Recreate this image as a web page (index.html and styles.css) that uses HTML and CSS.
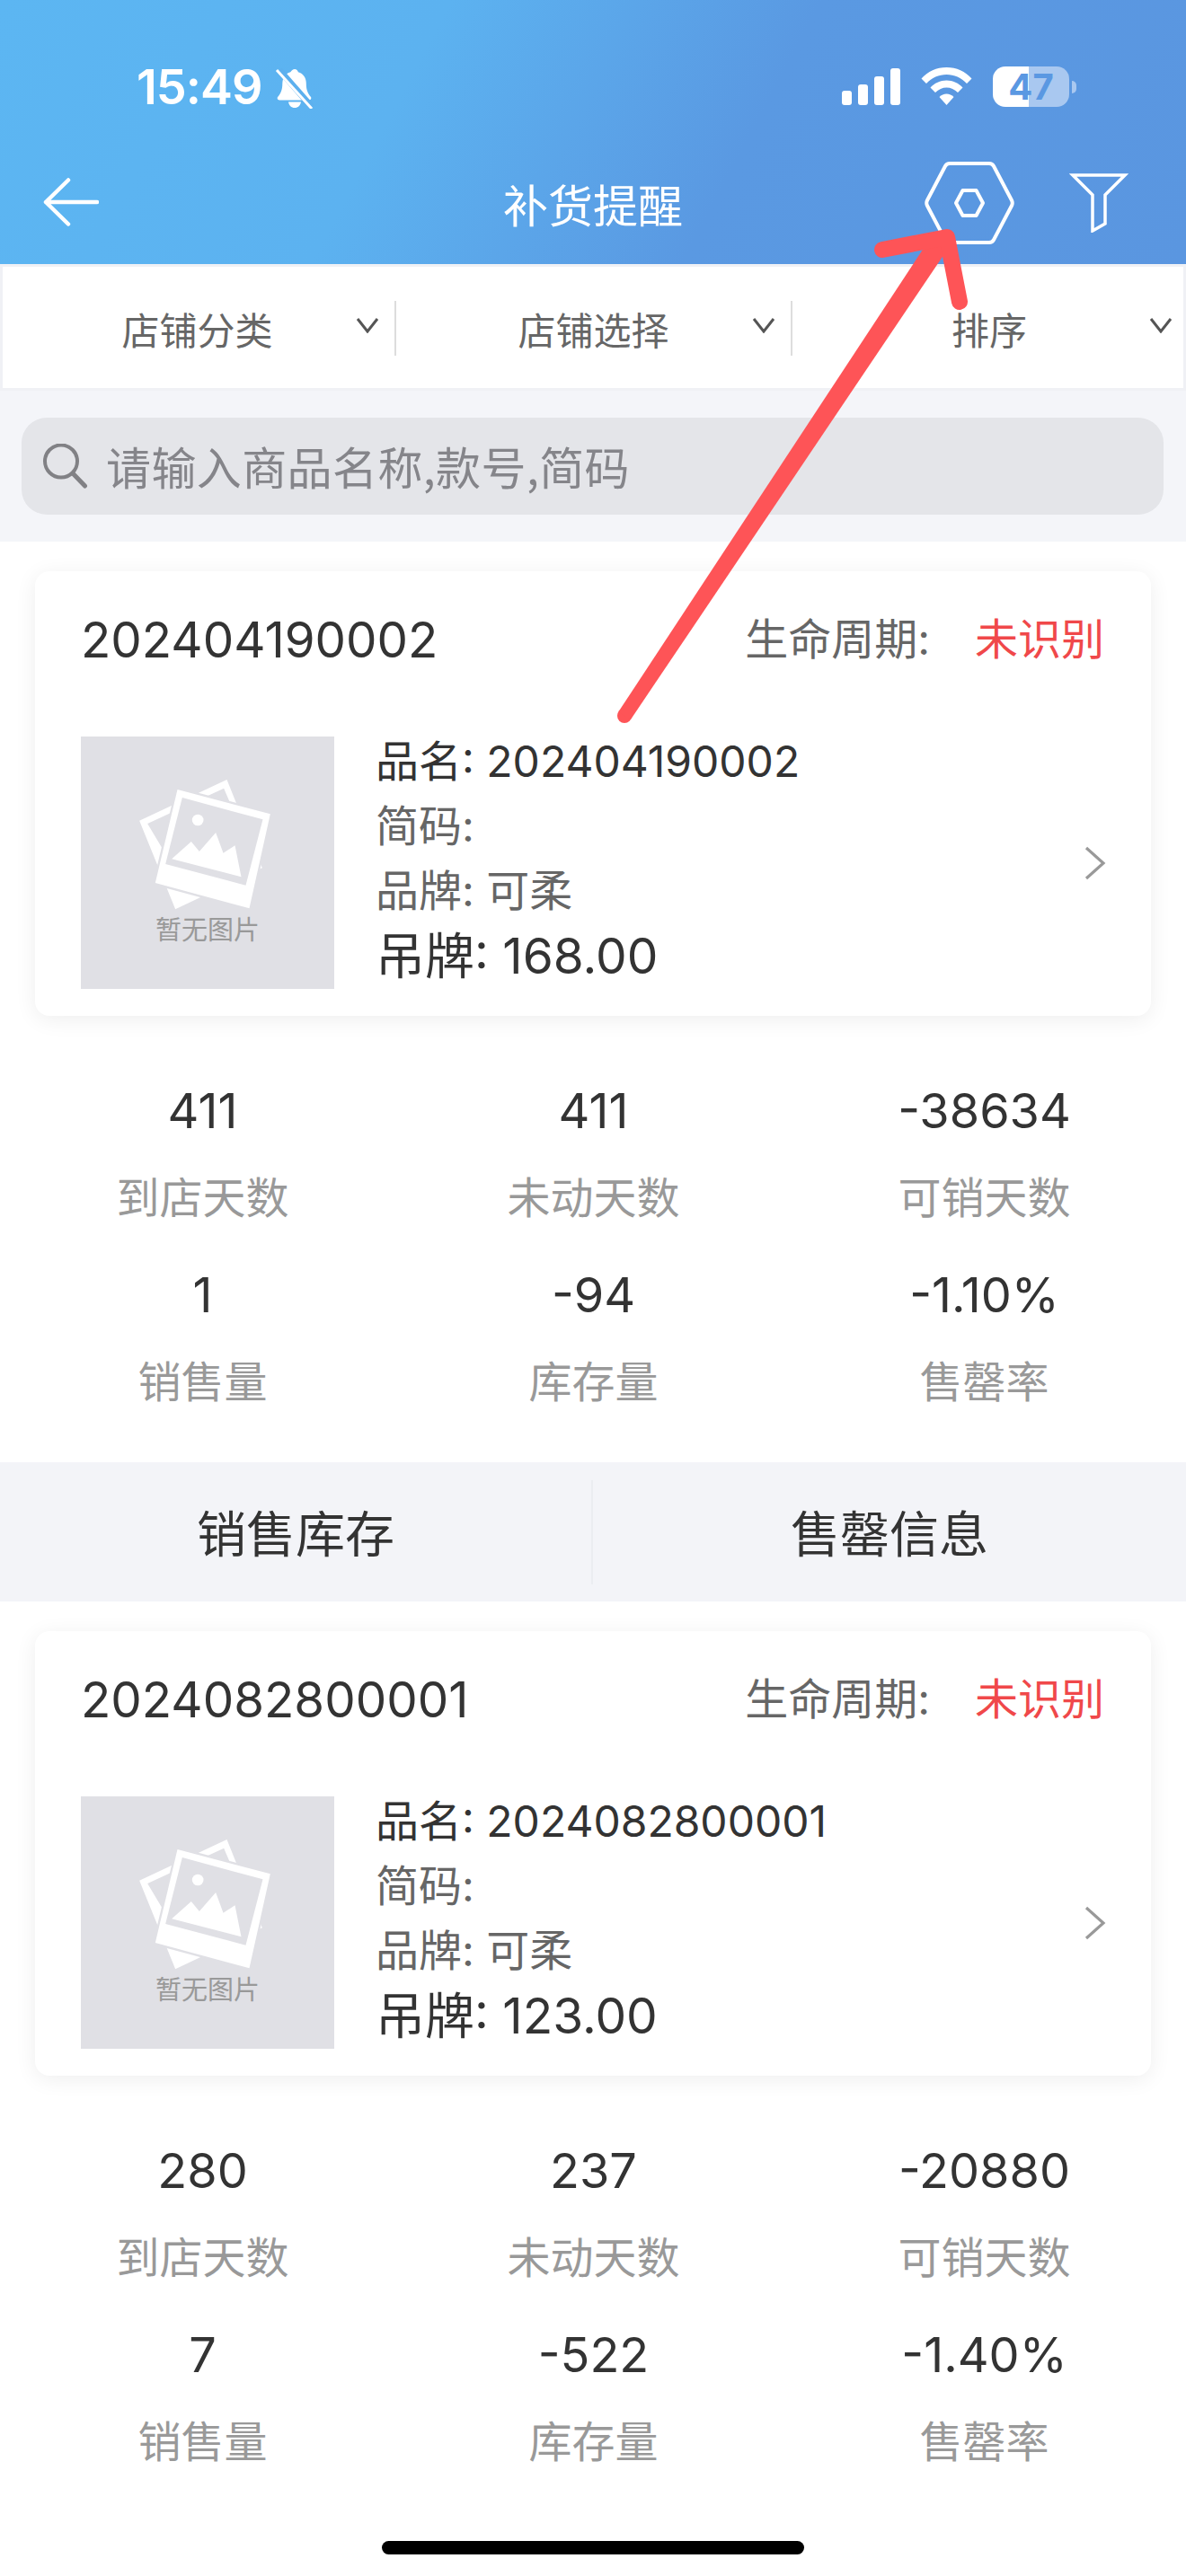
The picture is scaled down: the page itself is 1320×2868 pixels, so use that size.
FILE: index.html
```html
<!DOCTYPE html>
<html lang="zh">
<head>
<meta charset="utf-8">
<title>补货提醒</title>
<link rel="stylesheet" href="styles.css">
</head>
<body>
<div class="page">
  <header class="top">
    <div class="status">
      <div class="status-left">
        <span class="time">15:49</span>
        <svg class="bell" viewBox="0 0 44 46"><path d="M22 2c2 0 3.500 1.500 3.800 3.300 6 1.700 9 6.700 9 13 0 7 2 11 5 14.500 1.200 1.500.2 3.700-1.700 3.700H5c-2 0-3-2.200-1.700-3.700 3-3.500 5-7.500 5-14.500 0-6.300 3-11.300 9-13C18.500 3.500 20 2 22 2zM15 38.500h14c-.5 3.800-3.300 6.500-7 6.500s-6.500-2.700-7-6.500z" fill="#fff"/><path d="M5 3l36 41" stroke="#5cb0ee" stroke-width="7"/><path d="M2 3l39 43" stroke="#fff" stroke-width="3"/></svg>
      </div>
      <div class="status-right">
        <div class="signal"><i class="b1"></i><i class="b2"></i><i class="b3"></i><i class="b4"></i></div>
        <svg class="wifi" viewBox="0 0 57 42"><path d="M0.500 12.500C7.500 4.500 17.500 0 28.500 0S49.500 4.500 56.500 12.500L51 18C45 11.500 37 8 28.500 8S12 11.500 6 18z" fill="#fff"/><path d="M10.500 22.500C15 17.500 21.500 14.500 28.500 14.500S42 17.500 46.500 22.500L41 28C37.500 24.500 33 22.500 28.500 22.500S19.500 24.500 16 28z" fill="#fff"/><path d="M20.500 33C22.500 31 25.500 29.500 28.500 29.500S34.500 31 36.500 33L28.500 42z" fill="#fff"/></svg>
        <div class="battery"><div class="cell"><span class="pct">47</span></div><i class="nub"></i></div>
      </div>
    </div>
    <div class="nav">
      <svg class="back" viewBox="0 0 62 54"><path d="M60 27H3M28 2.500L3 27l25 24.500" fill="none" stroke="#fff" stroke-width="4.500" stroke-linecap="round" stroke-linejoin="round"/></svg>
      <h1 class="title">补货提醒</h1>
      <svg class="hex" viewBox="0 0 100 92"><path d="M28 2h44c2.200 0 4 1.100 5 3l20 38c1 2 1 4 0 6L77 87c-1 1.900-2.800 3-5 3H28c-2.200 0-4-1.100-5-3L3 49c-1-2-1-4 0-6L23 5c1-1.900 2.800-3 5-3z" fill="none" stroke="#fff" stroke-width="4"/><path d="M42.500 32h15l7.500 14-7.500 14h-15L35 46z" fill="none" stroke="#fff" stroke-width="4" stroke-linejoin="round"/></svg>
      <svg class="funnel" viewBox="0 0 66 66"><path d="M4 2h58L40 24v32l-14 8V24z" fill="none" stroke="#fff" stroke-width="3.500"/></svg>
    </div>
  </header>

  <div class="filters">
    <div class="filter"><span class="filter-text">店铺分类</span><svg class="chev" viewBox="0 0 26 18"><path d="M2 2l11 14L24 2" fill="none" stroke="#555" stroke-width="3"/></svg></div>
    <div class="filter"><span class="filter-text">店铺选择</span><svg class="chev" viewBox="0 0 26 18"><path d="M2 2l11 14L24 2" fill="none" stroke="#555" stroke-width="3"/></svg></div>
    <div class="filter last"><span class="filter-text">排序</span><svg class="chev" viewBox="0 0 26 18"><path d="M2 2l11 14L24 2" fill="none" stroke="#555" stroke-width="3"/></svg></div>
  </div>

  <div class="search-wrap">
    <div class="search">
      <svg class="search-icon" viewBox="0 0 50 50"><circle cx="20" cy="19.500" r="18" fill="none" stroke="#818185" stroke-width="4"/><path d="M33 33L46.500 47" stroke="#818185" stroke-width="5" stroke-linecap="round"/></svg>
      <span class="search-text">请输入商品名称,款号,简码</span>
    </div>
  </div>

  <section class="item">
    <div class="card">
      <div class="card-head">
        <span class="code">202404190002</span>
        <span class="life"><span class="life-label">生命周期:</span><span class="life-value">未识别</span></span>
      </div>
      <div class="card-body">
        <div class="thumb">
          <svg class="photo" viewBox="285 205 440 435"><path fill-rule="evenodd" d="M285 342L577 205 695 500 405 638zM312 352L400 500 680 500 567 234z" fill="#fff"/><path d="M412 238L722 320 652 635 338 550z" fill="#e0e0e5" stroke="#e0e0e5" stroke-width="14"/><path fill-rule="evenodd" d="M412 238L722 320 652 635 338 550zM428 265L697 338 640 558 372 487z" fill="#fff"/><path d="M393 470L458 412 485 445 540 382 565 450 604 425 625 530z" fill="#fff"/><circle cx="480" cy="340" r="19" fill="#fff"/></svg>
          <span class="thumb-text">暂无图片</span>
        </div>
        <div class="info">
          <div class="row dark">品名: 202404190002</div>
          <div class="row">简码:</div>
          <div class="row">品牌: 可柔</div>
          <div class="row tag">吊牌: 168.00</div>
        </div>
        <svg class="more" viewBox="0 0 24 38"><path d="M2 2l19 17L2 36" fill="none" stroke="#999" stroke-width="3.200"/></svg>
      </div>
    </div>
    <div class="stats">
      <div class="stat"><b>411</b><span>到店天数</span></div>
      <div class="stat"><b>411</b><span>未动天数</span></div>
      <div class="stat"><b>-38634</b><span>可销天数</span></div>
      <div class="stat"><b>1</b><span>销售量</span></div>
      <div class="stat"><b>-94</b><span>库存量</span></div>
      <div class="stat"><b>-1.10%</b><span>售罄率</span></div>
    </div>
    <div class="tabs">
      <div class="tab">销售库存</div>
      <div class="tab">售罄信息</div>
    </div>
  </section>

  <section class="item">
    <div class="card">
      <div class="card-head">
        <span class="code">2024082800001</span>
        <span class="life"><span class="life-label">生命周期:</span><span class="life-value">未识别</span></span>
      </div>
      <div class="card-body">
        <div class="thumb">
          <svg class="photo" viewBox="285 205 440 435"><path fill-rule="evenodd" d="M285 342L577 205 695 500 405 638zM312 352L400 500 680 500 567 234z" fill="#fff"/><path d="M412 238L722 320 652 635 338 550z" fill="#e0e0e5" stroke="#e0e0e5" stroke-width="14"/><path fill-rule="evenodd" d="M412 238L722 320 652 635 338 550zM428 265L697 338 640 558 372 487z" fill="#fff"/><path d="M393 470L458 412 485 445 540 382 565 450 604 425 625 530z" fill="#fff"/><circle cx="480" cy="340" r="19" fill="#fff"/></svg>
          <span class="thumb-text">暂无图片</span>
        </div>
        <div class="info">
          <div class="row dark">品名: 2024082800001</div>
          <div class="row">简码:</div>
          <div class="row">品牌: 可柔</div>
          <div class="row tag">吊牌: 123.00</div>
        </div>
        <svg class="more" viewBox="0 0 24 38"><path d="M2 2l19 17L2 36" fill="none" stroke="#999" stroke-width="3.200"/></svg>
      </div>
    </div>
    <div class="stats">
      <div class="stat"><b>280</b><span>到店天数</span></div>
      <div class="stat"><b>237</b><span>未动天数</span></div>
      <div class="stat"><b>-20880</b><span>可销天数</span></div>
      <div class="stat"><b>7</b><span>销售量</span></div>
      <div class="stat"><b>-522</b><span>库存量</span></div>
      <div class="stat"><b>-1.40%</b><span>售罄率</span></div>
    </div>
  </section>

  <div class="home-bar"></div>

  <svg class="annotation" viewBox="0 0 1320 2868"><circle cx="695" cy="797" r="8" fill="#fe5457"/><path d="M688.300 792.600L1040 258 1059 271 701.700 801.400z" fill="#fe5457"/><path d="M982 278L1054 264 1068 336" fill="none" stroke="#fe5457" stroke-width="18" stroke-linecap="round" stroke-linejoin="round"/></svg>
</div>
</body>
</html>
```
FILE: styles.css
```css
* { box-sizing: border-box; }
html, body { margin: 0; padding: 0; background: #fff; }
body { font-family: "Inter", "Noto Sans CJK SC", sans-serif; color: #333; }
.page { position: relative; width: 1320px; height: 2868px; overflow: hidden; background: #fff; }

.top { height: 294px; background: linear-gradient(118deg, #5cb6f2 0%, #5cb2f0 34%, #5a99e2 62%, #5a96e0 100%); color: #fff; display: flex; flex-direction: column; }
.status { height: 180px; display: flex; justify-content: space-between; padding: 74px 122px 0 152px; align-items: flex-start; }
.status-left { display: flex; align-items: flex-start; gap: 14px; }
.time { font-size: 54px; line-height: 46px; font-weight: 600; letter-spacing: -1px; }
.bell { width: 44px; height: 46px; margin-top: 1px; }
.status-right { display: flex; align-items: flex-start; gap: 23px; }
.signal { display: flex; align-items: flex-end; gap: 7px; height: 41px; margin-top: 2px; }
.signal i { display: block; width: 11px; background: #fff; border-radius: 3px; }
.signal .b1 { height: 16px; }
.signal .b2 { height: 23px; }
.signal .b3 { height: 32px; }
.signal .b4 { height: 41px; }
.wifi { width: 57px; height: 42px; margin-top: 1px; }
.battery { display: flex; align-items: center; gap: 3px; }
.cell { width: 85px; height: 45px; border-radius: 14px; background: linear-gradient(to right, #fff 40px, #a9c8f0 40px); display: flex; align-items: center; justify-content: center; }
.pct { font-size: 40px; line-height: 45px; font-weight: 700; color: #5a98e2; }
.nub { width: 5px; height: 14px; background: #a9c8f0; border-radius: 0 5px 5px 0; }

.nav { height: 114px; display: grid; grid-template-columns: 1fr auto 1fr; align-items: start; position: relative; }
.back { width: 62px; height: 54px; margin: 18px 0 0 48px; }
.title { margin: 17px 0 0; font-size: 50px; line-height: 58px; font-weight: 400; font-family: "Noto Sans CJK SC", sans-serif; }
.hex { position: absolute; left: 1029px; top: 0; width: 100px; height: 92px; }
.funnel { position: absolute; left: 1190px; top: 13px; width: 66px; height: 66px; }

.filters { height: 141px; display: grid; grid-template-columns: 441px 441px 438px; background: #fff; box-shadow: inset 0 0 0 3px #f0f1f5; padding: 41px 0 39px; }
.filter { display: grid; grid-template-columns: 1fr auto 1fr; align-items: center; border-right: 2px solid #ddd; }
.filter.last { border-right: 0; }
.filter-text { grid-column: 2; font-size: 42px; line-height: 60px; color: #666; font-family: "Noto Sans CJK SC", sans-serif; }
.chev { grid-column: 3; justify-self: end; width: 26px; height: 18px; margin: 0 17px 8px 0; }
.last .chev { margin-right: 15px; }

.search-wrap { height: 168px; background: #f4f5f9; padding: 30px 25px 30px 24px; }
.search { height: 108px; background: #e4e5e9; border-radius: 28px; display: flex; align-items: center; padding: 0 24px 2px; gap: 20px; }
.search-icon { width: 50px; height: 50px; flex: none; margin-top: 2px; }
.search-text { font-size: 50px; line-height: 60px; letter-spacing: .4px; color: #85858a; font-family: "Noto Sans CJK SC", sans-serif; }

.item { background: #fff; padding-top: 33px; }
.card { margin: 0 39px; height: 495px; background: #fff; border-radius: 16px; box-shadow: 0 4px 24px rgba(0,0,0,.07); padding: 0 51px; display: flex; flex-direction: column; }
.card-head { height: 184px; display: flex; justify-content: space-between; align-items: flex-start; padding-top: 40px; }
.code { font-size: 54.700px; line-height: 72px; color: #333; }
.life { display: flex; gap: 50px; font-size: 48px; line-height: 72px; margin-right: 1px; }
.life-label { color: #666; }
.life-value { color: #f0484a; }
.card-body { display: flex; align-items: flex-start; position: relative; }
.thumb { width: 282px; height: 281px; background: #e0e0e5; display: flex; flex-direction: column; align-items: center; flex: none; }
.photo { width: 147px; height: 145px; margin: 48px 5px 0 0; }
.thumb-text { font-size: 29px; line-height: 36px; color: #999; font-family: "Noto Sans CJK SC", sans-serif; margin-top: 2px; }
.info { margin-left: 46px; flex: 1; margin-top: -8px; }
.row { font-size: 48px; line-height: 72px; color: #666; }
.row.dark { color: #333; }
.row.tag { font-size: 55px; color: #333; }
.more { width: 24px; height: 38px; margin: 122px -1px 0 0; flex: none; }

.stats { display: grid; grid-template-columns: repeat(3, 435px); padding: 75px 7px 0 8px; grid-auto-rows: 205px; height: 497px; }
.stat { display: flex; flex-direction: column; align-items: center; }
.stat b { font-size: 54px; line-height: 62px; font-weight: 400; color: #333; }
.stat span { font-size: 48px; line-height: 62px; color: #999; margin-top: 31px; font-family: "Noto Sans CJK SC", sans-serif; }

.tabs { height: 155px; background: #f3f4f8; display: grid; grid-template-columns: 1fr 1fr; align-items: center; }
.tab { height: 116px; display: flex; align-items: center; justify-content: center; padding-bottom: 3px; font-size: 55px; color: #333; font-family: "Noto Sans CJK SC", sans-serif; }
.tab:first-child { border-right: 2px solid #ebedf1; }

.home-bar { position: absolute; left: 425px; top: 2829px; width: 470px; height: 15px; border-radius: 8px; background: #000; }
.annotation { position: absolute; inset: 0; width: 1320px; height: 2868px; pointer-events: none; }
```
